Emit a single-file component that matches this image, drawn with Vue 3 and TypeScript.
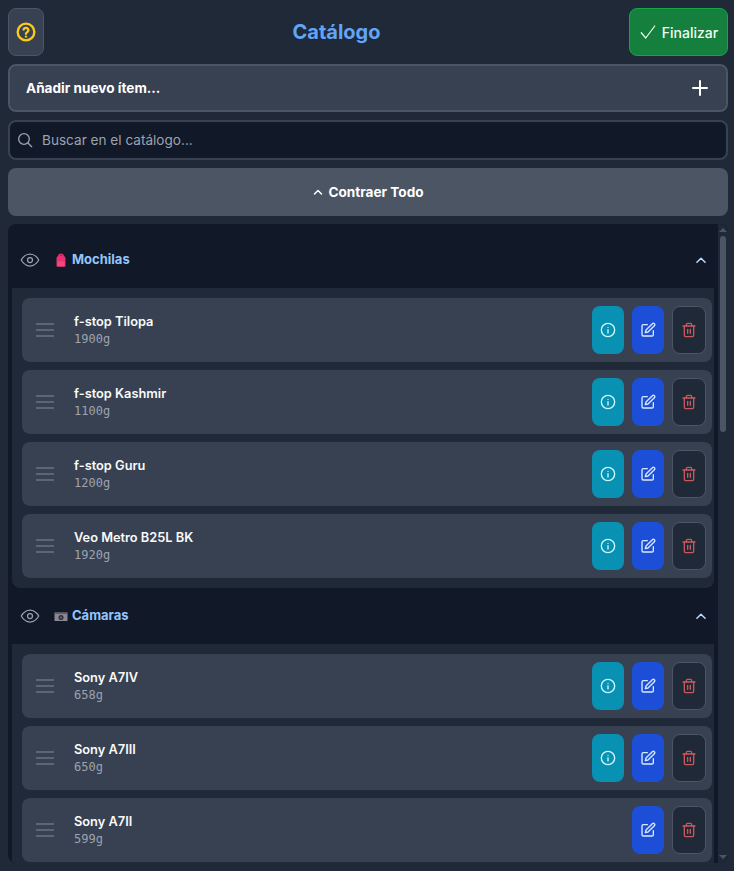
<script setup lang="ts">
interface Item {
  name: string
  weight: number
  info: boolean
}

interface Group {
  name: string
  icon: 'bag' | 'camera'
  items: Item[]
}

const groups: Group[] = [
  {
    name: 'Mochilas',
    icon: 'bag',
    items: [
      { name: 'f-stop Tilopa', weight: 1900, info: true },
      { name: 'f-stop Kashmir', weight: 1100, info: true },
      { name: 'f-stop Guru', weight: 1200, info: true },
      { name: 'Veo Metro B25L BK', weight: 1920, info: true },
    ],
  },
  {
    name: 'Cámaras',
    icon: 'camera',
    items: [
      { name: 'Sony A7IV', weight: 658, info: true },
      { name: 'Sony A7III', weight: 650, info: true },
      { name: 'Sony A7II', weight: 599, info: false },
    ],
  },
]
</script>

<template>
  <div class="page">
    <header class="top">
      <button class="help" title="Ayuda">
        <svg width="20" height="20" viewBox="0 0 24 24" fill="none" stroke="#facc15" stroke-width="2.800" stroke-linecap="round" stroke-linejoin="round">
          <circle cx="12" cy="12" r="10" />
          <path d="M9.100 9a3 3 0 0 1 5.800 1c0 2-3 2.600-3 4" />
          <path d="M12 17.500h.01" />
        </svg>
      </button>
      <h1 class="title">Catálogo</h1>
      <button class="finish">
        <svg width="18" height="18" viewBox="0 0 24 24" fill="none" stroke="currentColor" stroke-width="1.600" stroke-linecap="round" stroke-linejoin="round">
          <path d="M3 13l6 7L21 4" />
        </svg>
        Finalizar
      </button>
    </header>

    <button class="add">
      <span>Añadir nuevo ítem...</span>
      <svg width="20" height="20" viewBox="0 0 20 20" fill="none" stroke="#fff" stroke-width="2" stroke-linecap="round">
        <path d="M10 3v14M3 10h14" />
      </svg>
    </button>

    <label class="search">
      <svg width="16" height="16" viewBox="0 0 24 24" fill="none" stroke="#9ca3af" stroke-width="2" stroke-linecap="round">
        <circle cx="10.500" cy="10.500" r="8" />
        <path d="M16.500 16.500L22 22" />
      </svg>
      <input type="text" placeholder="Buscar en el catálogo..." />
    </label>

    <button class="collapse">
      <svg width="12" height="12" viewBox="0 0 24 24" fill="none" stroke="currentColor" stroke-width="3" stroke-linecap="round" stroke-linejoin="round">
        <path d="M5 16l7-7 7 7" />
      </svg>
      Contraer Todo
    </button>

    <div class="list-wrap">
      <main class="list">
        <section v-for="group in groups" :key="group.name" class="group">
          <div class="group-head">
            <svg class="eye" width="20" height="20" viewBox="0 0 24 24" fill="none" stroke="#9ca3af" stroke-width="1.500" stroke-linecap="round" stroke-linejoin="round">
              <path d="M1.500 12S5.500 4.800 12 4.800 22.500 12 22.500 12 18.500 19.200 12 19.200 1.500 12 1.500 12z" />
              <circle cx="12" cy="12" r="3" />
            </svg>
            <svg v-if="group.icon === 'bag'" class="emoji" width="14" height="14" viewBox="0 0 14 14">
              <path d="M3.800 3C4.300 1.300 5.500.5 7 .5s2.700.8 3.200 2.500l1.300 1.800V13.500H2.500V4.800z" fill="#e8326f" />
              <path d="M3.500 8.500h7v5h-7z" fill="#f4477f" />
              <path d="M5.200 1.800h3.600v1H5.200z" fill="#a8254f" />
            </svg>
            <svg v-else class="emoji" width="14" height="14" viewBox="0 0 14 14">
              <path d="M.5 3.500h13v8.500H.5z" fill="#8b8794" />
              <path d="M.5 3.500h13v1.500H.5z" fill="#5f5c68" />
              <circle cx="7" cy="8.500" r="2.500" fill="#2e2c36" />
              <circle cx="7" cy="8.500" r="1.100" fill="#6f6c7a" />
            </svg>
            <h2 class="group-name">{{ group.name }}</h2>
            <svg class="chevron" width="14" height="14" viewBox="0 0 24 24" fill="none" stroke="#bfdbfe" stroke-width="2.500" stroke-linecap="round" stroke-linejoin="round">
              <path d="M5 16l7-7 7 7" />
            </svg>
          </div>

          <div class="group-body">
            <article v-for="item in group.items" :key="item.name" class="item">
              <svg class="grip" width="18" height="14" viewBox="0 0 18 14" fill="none" stroke="#6b7280" stroke-width="1.500">
                <path d="M0 1h18M0 7h18M0 13h18" />
              </svg>
              <div class="meta">
                <div class="name">{{ item.name }}</div>
                <div class="weight">{{ item.weight }}g</div>
              </div>
              <div class="actions">
                <button v-if="item.info" class="act act-info" title="Info">
                  <svg width="16" height="16" viewBox="0 0 24 24" fill="none" stroke="currentColor" stroke-width="2" stroke-linecap="round">
                    <circle cx="12" cy="12" r="10" />
                    <path d="M12 11.500v5M12 8h.01" />
                  </svg>
                </button>
                <button class="act act-edit" title="Editar">
                  <svg width="16" height="16" viewBox="0 0 24 24" fill="none" stroke="currentColor" stroke-width="2" stroke-linecap="round" stroke-linejoin="round">
                    <path d="M11 4H5a2 2 0 0 0-2 2v13a2 2 0 0 0 2 2h13a2 2 0 0 0 2-2v-6" />
                    <path d="M18.500 2.500a2.100 2.100 0 0 1 3 3L12 15l-4 1 1-4z" />
                  </svg>
                </button>
                <button class="act act-del" title="Eliminar">
                  <svg width="16" height="16" viewBox="0 0 24 24" fill="none" stroke="currentColor" stroke-width="2" stroke-linecap="round" stroke-linejoin="round">
                    <path d="M3 6h18" />
                    <path d="M19 6v14a2 2 0 0 1-2 2H7a2 2 0 0 1-2-2V6" />
                    <path d="M8 6V4a2 2 0 0 1 2-2h4a2 2 0 0 1 2 2v2" />
                    <path d="M10 11v6M14 11v6" />
                  </svg>
                </button>
              </div>
            </article>
          </div>
        </section>
      </main>

      <!-- the sandbox browser hides native scrollbars, so this one is drawn -->
      <div class="scrollbar" aria-hidden="true">
        <span class="arrow arrow-up"></span>
        <span class="thumb"></span>
        <span class="arrow arrow-down"></span>
      </div>
    </div>
  </div>
</template>

<style>
html,
body {
  margin: 0;
  background: #1f2937;
}
</style>

<style scoped>
.page {
  box-sizing: border-box;
  display: flex;
  flex-direction: column;
  gap: 8px;
  height: 871px;
  padding: 8px 6px 8px 8px;
  background: #1f2937;
  font-family: Inter, "Noto Sans", sans-serif;
  color: #fff;
  overflow: hidden;
}

button {
  font-family: inherit;
  cursor: pointer;
}

.top {
  display: flex;
  align-items: center;
  justify-content: space-between;
  height: 48px;
  flex-shrink: 0;
}

.help {
  display: flex;
  align-items: center;
  justify-content: center;
  width: 36px;
  height: 48px;
  padding: 0;
  border: 1px solid #4b5563;
  border-radius: 8px;
  background: #374151;
}

.title {
  margin: 0;
  font-size: 20px;
  font-weight: 700;
  color: #60a5fa;
}

.finish {
  box-sizing: border-box;
  display: flex;
  align-items: center;
  justify-content: center;
  gap: 5px;
  width: 99px;
  height: 48px;
  padding: 0;
  border: 1px solid #16a34a;
  border-radius: 8px;
  background: #15803d;
  color: #f0fdf4;
  font-size: 14px;
  font-weight: 500;
}

.add {
  box-sizing: border-box;
  display: flex;
  align-items: center;
  justify-content: space-between;
  height: 48px;
  flex-shrink: 0;
  padding: 0 16px;
  border: 2px solid #4b5563;
  border-radius: 8px;
  background: #374151;
  color: #fff;
  font-size: 13.6px;
  font-weight: 700;
}

.search {
  box-sizing: border-box;
  display: flex;
  align-items: center;
  gap: 9px;
  height: 40px;
  flex-shrink: 0;
  padding: 0 7px;
  border: 2px solid #374151;
  border-radius: 8px;
  background: #111827;
}

.search input {
  flex: 1;
  min-width: 0;
  padding: 0;
  border: none;
  outline: none;
  background: transparent;
  color: #fff;
  font-family: inherit;
  font-size: 13.6px;
}

.search input::placeholder {
  color: #9ca3af;
  opacity: 1;
}

.collapse {
  display: flex;
  align-items: center;
  justify-content: center;
  gap: 4px;
  height: 48px;
  flex-shrink: 0;
  padding: 0 0 1px;
  border: none;
  border-radius: 8px;
  background: #4b5563;
  color: #fff;
  font-size: 13.6px;
  font-weight: 700;
}

.list-wrap {
  display: flex;
  flex: 1;
  min-height: 0;
  border-radius: 8px;
  overflow: hidden;
  background: #111827;
}

.list {
  flex: 1;
  min-width: 0;
  overflow: hidden;
  padding: 8px 4px 0;
}

.scrollbar {
  display: flex;
  flex-direction: column;
  align-items: center;
  flex-shrink: 0;
  width: 10px;
  background: #1f2937;
}

.arrow {
  flex-shrink: 0;
  width: 0;
  height: 0;
  border-left: 4px solid transparent;
  border-right: 4px solid transparent;
}

.arrow-up {
  margin: 4px 0;
  border-bottom: 4px solid #4b5563;
}

.arrow-down {
  margin: auto 0 4px;
  border-top: 4px solid #4b5563;
}

.thumb {
  flex-shrink: 0;
  width: 6px;
  height: 196px;
  border-radius: 3px;
  background: #4b5563;
}

.group-head {
  display: flex;
  align-items: center;
  height: 56px;
  padding: 0 6px 0 8px;
}

.eye {
  flex-shrink: 0;
}

.emoji {
  margin-left: 14px;
  flex-shrink: 0;
}

.group-name {
  flex: 1;
  margin: -2px 0 0 4px;
  font-size: 13px;
  font-weight: 700;
  color: #93c5fd;
}

.chevron {
  flex-shrink: 0;
}

.group-body {
  display: flex;
  flex-direction: column;
  gap: 8px;
  padding: 10px 2px 10px 10px;
  border-radius: 0 0 8px 8px;
  background: #1f2937;
}

.item {
  display: flex;
  align-items: center;
  height: 64px;
  padding: 0 6px 0 14px;
  border-radius: 8px;
  background: #374151;
}

.grip {
  flex-shrink: 0;
}

.meta {
  flex: 1;
  min-width: 0;
  margin-left: 20px;
}

.name {
  font-size: 12.8px;
  font-weight: 600;
  line-height: 18px;
  margin-top: -1px;
  color: #f9fafb;
}

.weight {
  font-family: "DejaVu Sans Mono", monospace;
  font-size: 12px;
  line-height: 16px;
  color: #9ca3af;
}

.actions {
  display: flex;
  gap: 8px;
  flex-shrink: 0;
}

.act {
  box-sizing: border-box;
  display: flex;
  align-items: center;
  justify-content: center;
  width: 32px;
  height: 48px;
  padding: 0;
  border: none;
  border-radius: 8px;
}

.act-info {
  background: #0891b2;
  color: #cffafe;
}

.act-edit {
  background: #1d4ed8;
  color: #dbeafe;
}

.act-del {
  width: 34px;
  border: 1px solid #4b5563;
  background: #1f2937;
  color: #c9595c;
}
</style>
